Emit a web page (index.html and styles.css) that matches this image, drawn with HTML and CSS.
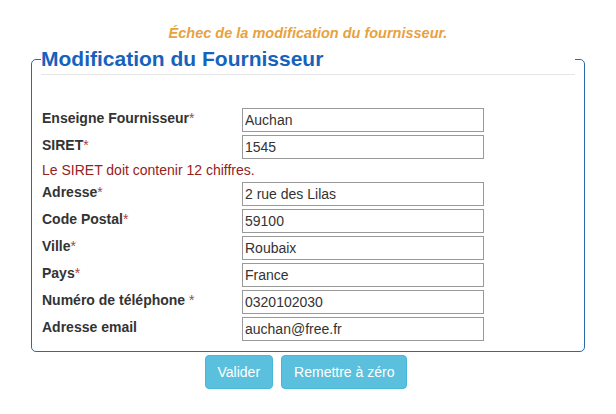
FILE: index.html
```html
<!DOCTYPE html>
<html lang="fr">
<head>
<meta charset="utf-8">
<title>Modification du Fournisseur</title>
<link rel="stylesheet" href="styles.css">
</head>
<body>
<p class="alert">Échec de la modification du fournisseur.</p>
<form class="form">
  <fieldset class="box">
    <legend class="title">Modification du Fournisseur</legend>
    <div class="grid">
      <label class="lbl">Enseigne Fournisseur<span class="req">*</span></label>
      <input class="inp" type="text" value="Auchan">
      <label class="lbl">SIRET<span class="req">*</span></label>
      <input class="inp" type="text" value="1545">
      <div class="err">Le SIRET doit contenir 12 chiffres.</div>
      <label class="lbl">Adresse<span class="req">*</span></label>
      <input class="inp" type="text" value="2 rue des Lilas">
      <label class="lbl">Code Postal<span class="req">*</span></label>
      <input class="inp" type="text" value="59100">
      <label class="lbl">Ville<span class="req">*</span></label>
      <input class="inp" type="text" value="Roubaix">
      <label class="lbl">Pays<span class="req">*</span></label>
      <input class="inp" type="text" value="France">
      <label class="lbl">Numéro de téléphone <span class="req">*</span></label>
      <input class="inp" type="text" value="0320102030">
      <label class="lbl">Adresse email</label>
      <input class="inp" type="text" value="auchan@free.fr">
    </div>
  </fieldset>
  <div class="actions">
    <button class="btn" type="submit">Valider</button>
    <button class="btn" type="reset">Remettre à zéro</button>
  </div>
</form>
</body>
</html>
```
FILE: styles.css
```css
html, body {
  background: #fff;
}
body {
  margin: 8px;
  font-family: "Liberation Sans", Arial, sans-serif;
  color: #333;
}
.alert {
  margin: 16px 0 0;
  text-align: center;
  font-size: 14.5px;
  line-height: 18px;
  font-weight: bold;
  font-style: italic;
  color: #e8a23e;
}
.form {
  width: 554px;
  margin: 2px auto 0;
}
.box {
  margin: 0;
  padding: 0 9px 10px;
  border: 1px solid #2a6aa6;
  border-radius: 5px;
  min-width: 0;
}
.title {
  box-sizing: border-box;
  width: 100%;
  padding: 0;
  margin-bottom: 33px;
  font-size: 21px;
  line-height: 30px;
  font-weight: bold;
  color: #1762bd;
  border-bottom: 1px solid #e5e5e5;
}
.grid {
  display: grid;
  grid-template-columns: 200px 242px;
  row-gap: 3px;
  padding-left: 1px;
}
.lbl {
  font-size: 14px;
  line-height: 18px;
  font-weight: bold;
  color: #333;
  margin-top: 1px;
}
.req {
  color: #a94442;
  font-weight: normal;
}
.inp {
  box-sizing: border-box;
  width: 242px;
  height: 24px;
  margin: 0;
  padding: 0 2px;
  border: 1px solid #999;
  border-radius: 0;
  font-family: "Liberation Sans", Arial, sans-serif;
  font-size: 14px;
  color: #333;
  background: #fff;
}
.err {
  grid-column: 1 / -1;
  font-size: 14px;
  line-height: 17px;
  color: #952222;
}
.actions {
  display: flex;
  justify-content: center;
  gap: 8px;
  margin-top: 3px;
  padding-right: 4px;
}
.btn {
  font-family: "Liberation Sans", Arial, sans-serif;
  font-size: 14px;
  line-height: 20px;
  padding: 6px 12px;
  color: #fff;
  background: #5bc0de;
  border: 1px solid #46b8da;
  border-radius: 4px;
}
```
